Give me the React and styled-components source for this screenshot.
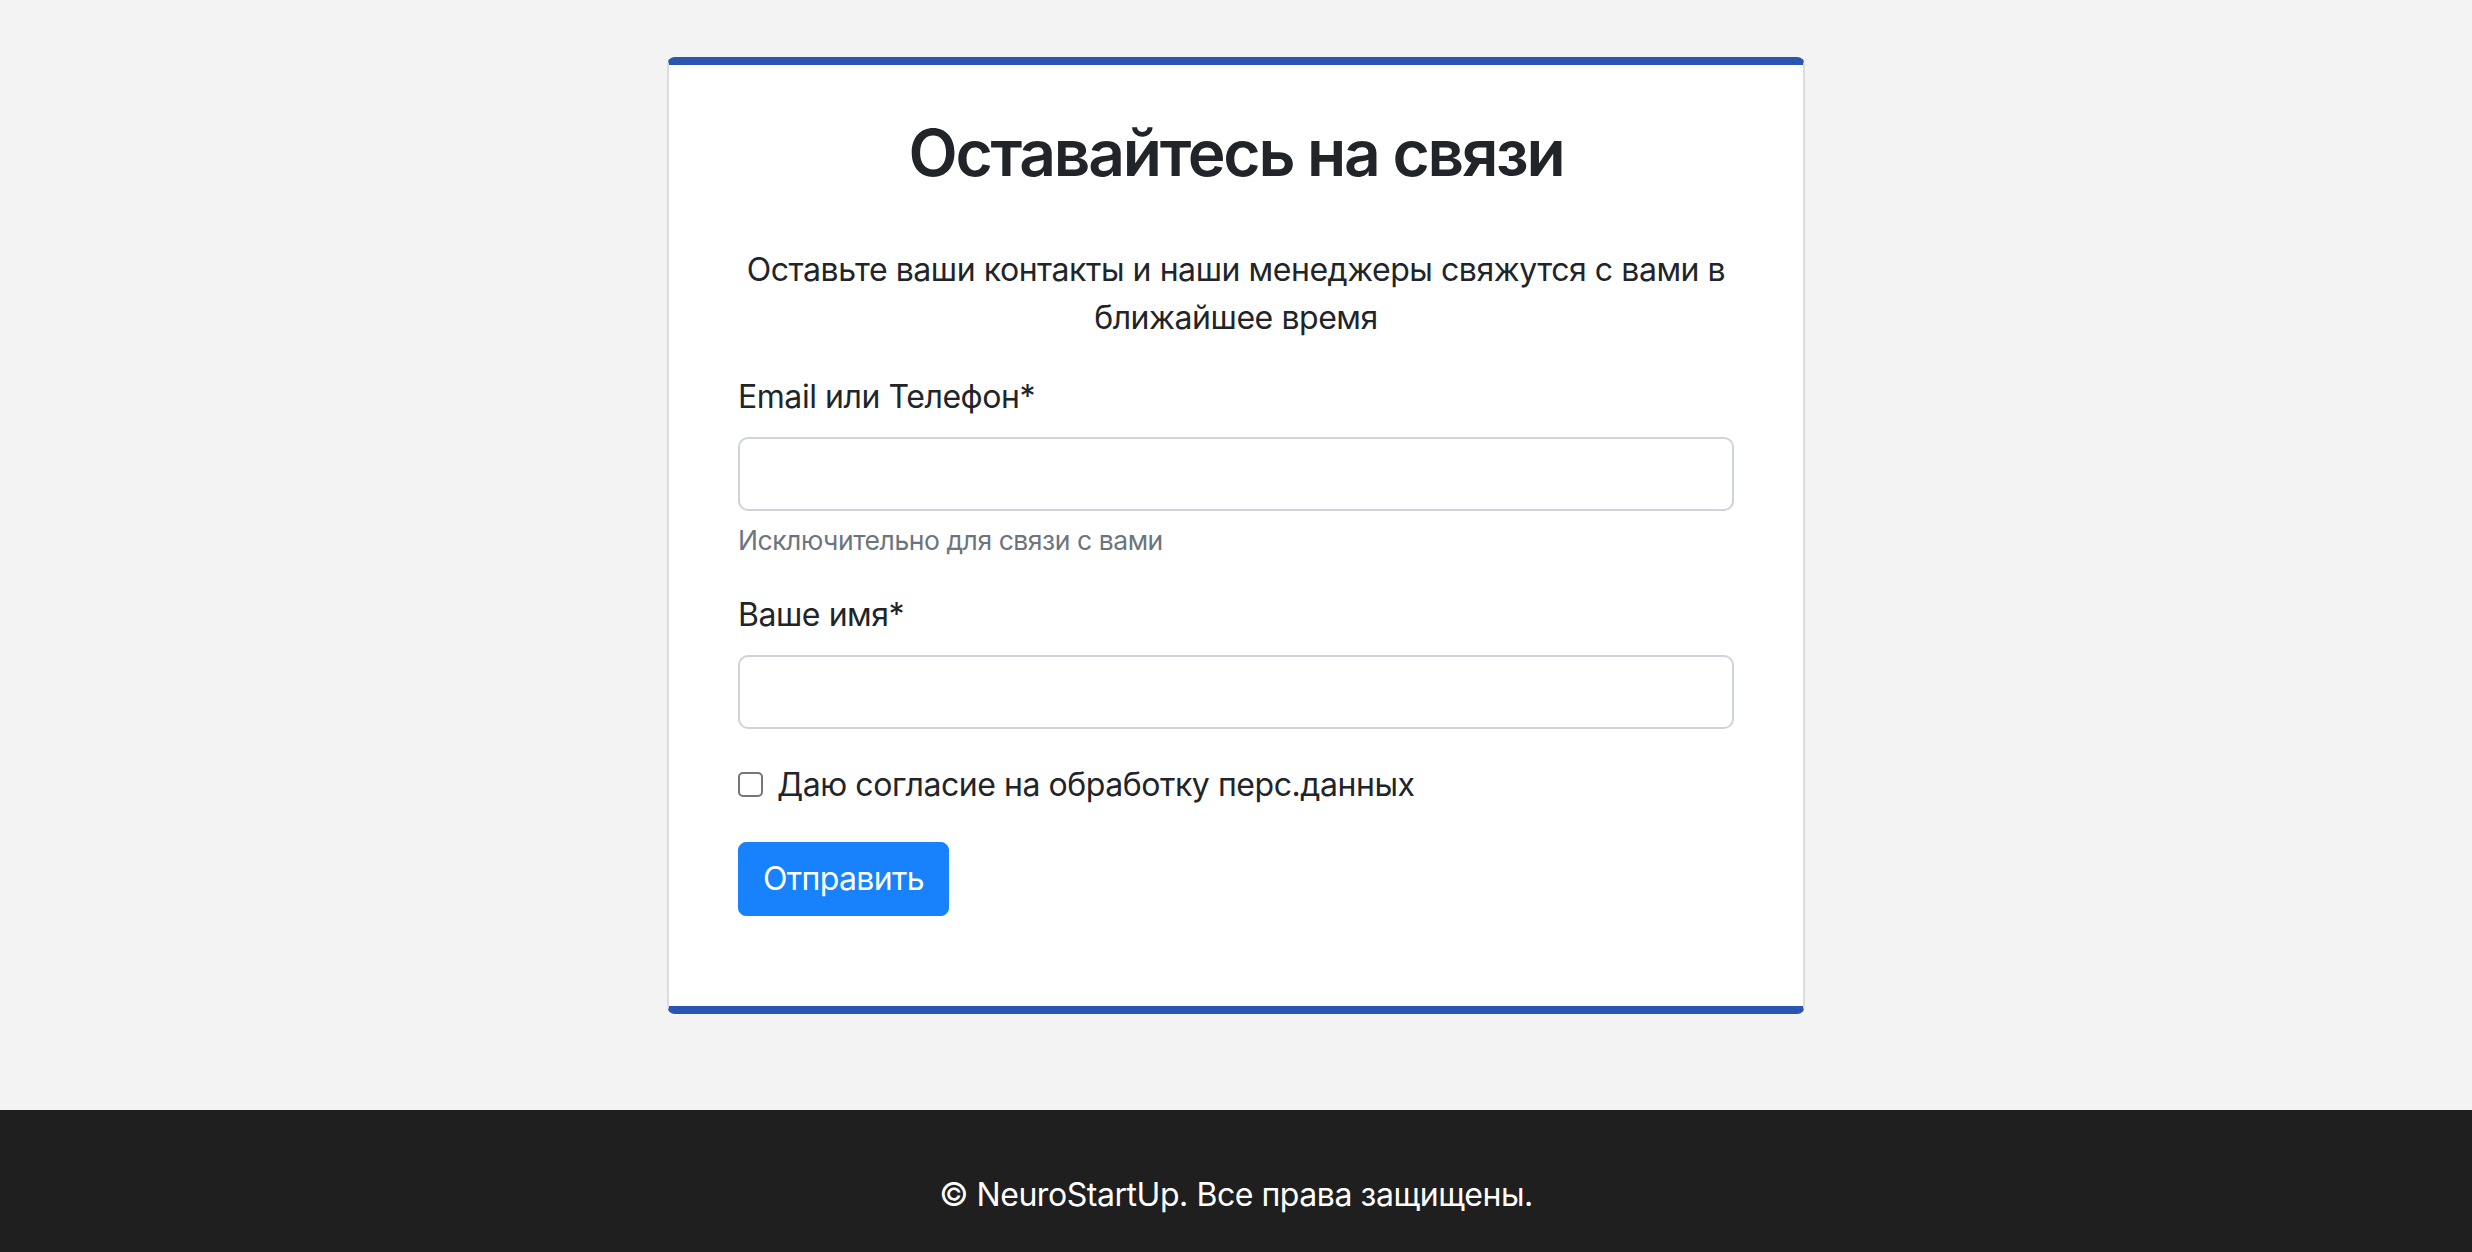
import React from "react";
import styled, { createGlobalStyle } from "styled-components";

const GlobalStyle = createGlobalStyle`
  html, body {
    margin: 0;
    padding: 0;
    background: #f3f3f3;
  }
  body {
    font-family: Inter, "Noto Sans", sans-serif;
    color: #212529;
    letter-spacing: -0.028em;
  }
  * { box-sizing: border-box; }
`;

const Page = styled.div`
  display: flex;
  flex-direction: column;
  min-height: 100vh;
`;

const Main = styled.main`
  display: flex;
  justify-content: center;
  padding: 57px 0 96px;
`;

const Card = styled.section`
  width: 1138px;
  background: #ffffff;
  border: 2px solid #dcdcdc;
  border-top: 8px solid #2a55b1;
  border-bottom: 8px solid #2a55b1;
  border-radius: 8px;
  padding: 50px 69px 90px;
`;

const Title = styled.h2`
  margin: 0;
  font-size: 64px;
  font-weight: 600;
  letter-spacing: -0.035em;
  line-height: 1.2;
  text-align: center;
  color: #212529;
`;

const Lead = styled.p`
  margin: 54px 0 31px;
  font-size: 32px;
  line-height: 1.5;
  text-align: center;
`;

const Form = styled.form`
  display: flex;
  flex-direction: column;
`;

const Group = styled.div`
  display: flex;
  flex-direction: column;
  margin-bottom: ${(p) => p.$mb || 32}px;
`;

const Label = styled.label`
  display: block;
  font-size: 32px;
  line-height: 1.5;
  margin-bottom: 16px;
`;

const Input = styled.input`
  width: 100%;
  height: 74px;
  border: 2px solid #ced4da;
  border-radius: 10px;
  background: #fff;
  font-size: 32px;
  padding: 0 24px;
  font-family: inherit;
  outline: none;
`;

const Help = styled.div`
  margin-top: 8px;
  font-size: 26.5px;
  line-height: 42px;
  color: #6c757d;
`;

const CheckRow = styled.label`
  display: flex;
  align-items: center;
  gap: 14px;
  font-size: 32px;
  line-height: 1.5;
  margin-bottom: 33px;
`;

const Check = styled.input`
  appearance: none;
  -webkit-appearance: none;
  width: 25px;
  height: 25px;
  margin: 0;
  border: 2px solid #767676;
  border-radius: 5px;
  background: #fff;
  flex-shrink: 0;
`;

const Button = styled.button`
  align-self: flex-start;
  background: #1782fb;
  color: #ffffff;
  border: 1px solid #1782fb;
  border-radius: 8px;
  padding: 12px 24px;
  font-family: inherit;
  font-size: 32px;
  letter-spacing: -0.02em;
  line-height: 1.5;
  font-weight: 400;
  cursor: pointer;
`;

const Footer = styled.footer`
  background: #1f1f1f;
  color: #ffffff;
  text-align: center;
  font-size: 32px;
  line-height: 1.5;
  padding: 61px 0 33px;
`;

export default function App() {
  return (
    <Page>
      <GlobalStyle />
      <Main>
        <Card>
          <Title>Оставайтесь на связи</Title>
          <Lead>
            Оставьте ваши контакты и наши менеджеры свяжутся с вами в ближайшее время
          </Lead>
          <Form onSubmit={(e) => e.preventDefault()}>
            <Group $mb={30}>
              <Label htmlFor="contact">Email или Телефон*</Label>
              <Input id="contact" type="text" />
              <Help>Исключительно для связи с вами</Help>
            </Group>
            <Group $mb={32}>
              <Label htmlFor="name">Ваше имя*</Label>
              <Input id="name" type="text" />
            </Group>
            <CheckRow>
              <Check type="checkbox" />
              Даю согласие на обработку перс.данных
            </CheckRow>
            <Button type="submit">Отправить</Button>
          </Form>
        </Card>
      </Main>
      <Footer>© NeuroStartUp. Все права защищены.</Footer>
    </Page>
  );
}
